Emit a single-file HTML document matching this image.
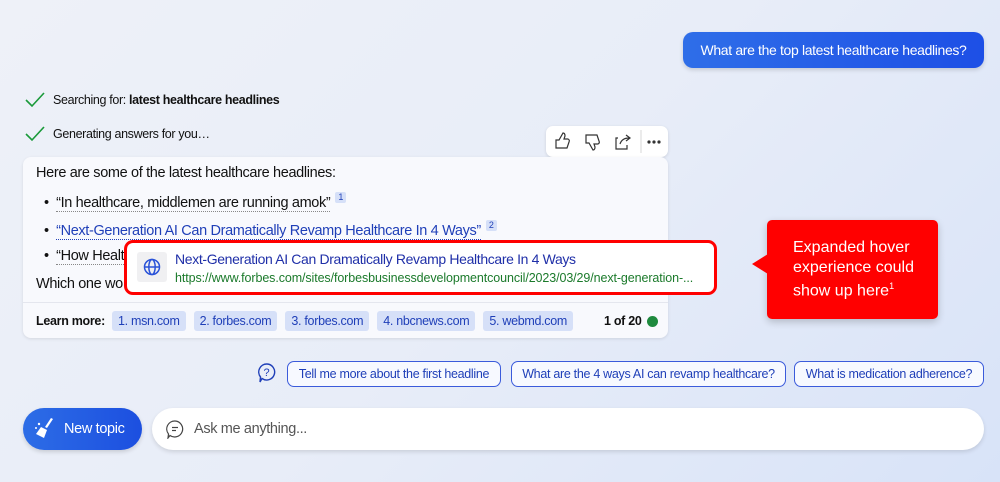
<!DOCTYPE html>
<html><head><meta charset="utf-8"><style>
*{margin:0;padding:0;box-sizing:border-box}
body{width:1000px;height:482px;overflow:hidden;font-family:"Liberation Sans",sans-serif;background:linear-gradient(135deg,#eef1f8 0%,#e8edf8 50%,#d8e3f8 100%);position:relative;color:#111}
.a{position:absolute;white-space:nowrap}
.n{letter-spacing:-0.35px}
.chip{position:absolute;top:361px;height:26px;border:1px solid #3b5bdb;border-radius:7px;background:#f7f9ff;color:#1f3fb8;font-size:12.5px;line-height:24px;text-align:center;letter-spacing:-0.3px}
.src{display:inline-block;background:#d6e0f8;color:#1f3fb8;border-radius:3px;padding:0 6px;height:20px;line-height:20px;margin-right:8px;font-size:12.5px;letter-spacing:-0.3px}
.sup{display:inline-block;background:#d6e0f8;color:#1f3fb8;font-size:9px;line-height:11px;padding:0 3px;border-radius:2px;vertical-align:7px;margin-left:5px}
.dot{border-bottom:1px dotted #888}
</style></head><body>
<div class="a n" style="left:683px;top:32px;width:301px;height:36px;border-radius:10px;background:linear-gradient(90deg,#2f6ee8,#1d4fe6);color:#fff;font-size:14px;line-height:36px;text-align:center;box-shadow:0 2px 4px rgba(0,0,0,.15)">What are the top latest healthcare headlines?</div>

<svg class="a" style="left:24px;top:91px" width="22" height="18"><path d="M2 9 L8 15 L20 2" stroke="#1a9a3a" stroke-width="1.6" fill="none"/></svg>
<div class="a n" style="left:53px;top:93px;font-size:12.5px">Searching for: <b>latest healthcare headlines</b></div>
<svg class="a" style="left:24px;top:125px" width="22" height="18"><path d="M2 9 L8 15 L20 2" stroke="#1a9a3a" stroke-width="1.6" fill="none"/></svg>
<div class="a n" style="left:53px;top:127px;font-size:12.5px">Generating answers for you…</div>

<div class="a" style="left:546px;top:126px;width:122px;height:31px;background:#fff;border-radius:7px;box-shadow:0 1px 3px rgba(0,0,0,.12)">
<svg width="122" height="31" fill="none" stroke="#333" stroke-width="1.2"><path d="M10 22 V14 H13 L17 7 Q19 7 19 10 L18 13 H22 Q24 14 23 16 L21 22 Z"/><path d="M40 9 V17 H43 L47 24 Q49 24 49 21 L48 18 H52 Q54 17 53 15 L51 9 Z"/><path d="M72 12 H70 V23 H81 V19 M74 18 Q76 12 83 12 M80 9 L84 12 L80 15"/><line x1="95" y1="4" x2="95" y2="27" stroke="#ddd"/><circle cx="103" cy="16" r="1" fill="#333"/><circle cx="108" cy="16" r="1" fill="#333"/><circle cx="113" cy="16" r="1" fill="#333"/></svg></div>

<div class="a" style="left:23px;top:157px;width:645px;height:181px;background:#f8f9fd;border-radius:8px;box-shadow:0 1px 3px rgba(0,0,0,.1)">
<div class="a n" style="left:13px;top:8px;font-size:14.5px">Here are some of the latest healthcare headlines:</div>
<div class="a n" style="left:21px;top:35px;font-size:14.5px">•&nbsp; <span class="dot">“In healthcare, middlemen are running amok”</span><span class="sup">1</span></div>
<div class="a n" style="left:21px;top:63px;font-size:14.5px">•&nbsp; <span class="dot" style="color:#1f3fb8;border-color:#1f3fb8">“Next-Generation AI Can Dramatically Revamp Healthcare In 4 Ways”</span><span class="sup">2</span></div>
<div class="a n" style="left:21px;top:91px;font-size:14.5px">•&nbsp; <span class="dot">“How Healt</span></div>
<div class="a n" style="left:13px;top:119px;font-size:14.5px">Which one wo</div>
<div class="a" style="left:0;top:145px;width:645px;height:1px;background:#e4e6ee"></div>
<div class="a" style="left:13px;top:154px;font-size:12.5px;letter-spacing:-0.3px;line-height:20px"><b style="margin-right:7px">Learn more:</b><span class="src">1. msn.com</span><span class="src">2. forbes.com</span><span class="src">3. forbes.com</span><span class="src">4. nbcnews.com</span><span class="src">5. webmd.com</span></div>
<div class="a" style="left:581px;top:157px;font-size:12.5px;font-weight:bold;letter-spacing:-0.3px">1 of 20</div>
<div class="a" style="left:624px;top:159px;width:11px;height:11px;border-radius:50%;background:#1e8a3e"></div>
</div>

<div class="a" style="left:124px;top:240px;width:593px;height:55px;background:#fff;border:3.5px solid #f00;border-radius:9px">
<div class="a" style="left:10px;top:9px;width:30px;height:30px;background:#f0f0f2;border-radius:3px"></div>
<svg class="a" style="left:16px;top:15px" width="18" height="18" fill="none" stroke="#2a53d8" stroke-width="1.5"><circle cx="9" cy="9" r="7.5"/><ellipse cx="9" cy="9" rx="3.2" ry="7.5"/><line x1="1.5" y1="9" x2="16.5" y2="9"/></svg>
<div class="a n" style="left:48px;top:8px;font-size:14px;color:#1f2fa8">Next-Generation AI Can Dramatically Revamp Healthcare In 4 Ways</div>
<div class="a" style="left:48px;top:28px;font-size:12.5px;color:#1b7a2b;letter-spacing:-0.1px">https://www.forbes.com/sites/forbesbusinessdevelopmentcouncil/2023/03/29/next-generation-...</div>
</div>

<div class="a" style="left:767px;top:220px;width:171px;height:99px;background:#f00;border-radius:5px;box-shadow:0 3px 8px rgba(0,0,0,.2)"></div>
<div class="a" style="left:752px;top:254px;width:0;height:0;border-top:10px solid transparent;border-bottom:10px solid transparent;border-right:16px solid #f00"></div>
<div class="a" style="left:793px;top:238px;color:#fff;font-size:16px;line-height:19.5px;letter-spacing:0px">Expanded hover<br>experience could<br>show up here<sup style="font-size:9px">1</sup></div>

<svg class="a" style="left:257px;top:362px" width="20" height="22" fill="none" stroke="#1f3fb8" stroke-width="1.4"><path d="M10 2 A8 8 0 1 1 5 16.5 L3 20 L3.5 15 A8 8 0 0 1 10 2Z"/><text x="6.5" y="14" font-size="11" fill="#1f3fb8" stroke="none" font-family="Liberation Sans">?</text></svg>
<div class="chip" style="left:287px;width:214px">Tell me more about the first headline</div>
<div class="chip" style="left:511px;width:275px">What are the 4 ways AI can revamp healthcare?</div>
<div class="chip" style="left:794px;width:190px">What is medication adherence?</div>

<div class="a" style="left:23px;top:408px;width:119px;height:42px;border-radius:21px;background:linear-gradient(90deg,#2d6de6,#1c4fe0);box-shadow:0 2px 4px rgba(0,0,0,.15)"></div>
<svg class="a" style="left:33px;top:416px" width="24" height="26" fill="#fff"><path d="M18 2 L20 3 L14 12 L12 11Z"/><path d="M8 11 L14 14 L11 22 L3 18Z"/><circle cx="6" cy="8" r="1.2"/><circle cx="3" cy="12" r="1"/></svg>
<div class="a n" style="left:64px;top:421px;color:#fff;font-size:14.5px">New topic</div>

<div class="a" style="left:152px;top:408px;width:832px;height:42px;border-radius:21px;background:#fff;box-shadow:0 2px 4px rgba(0,0,0,.12)"></div>
<svg class="a" style="left:165px;top:419px" width="20" height="20" fill="none" stroke="#444" stroke-width="1.2"><path d="M10 2 A8 8 0 1 1 5 16.5 L3 19 L3.5 15 A8 8 0 0 1 10 2Z"/><line x1="7" y1="8.5" x2="13" y2="8.5"/><line x1="7" y1="11.5" x2="11" y2="11.5"/></svg>
<div class="a n" style="left:194px;top:421px;color:#555;font-size:14.5px">Ask me anything...</div>
</body></html>
